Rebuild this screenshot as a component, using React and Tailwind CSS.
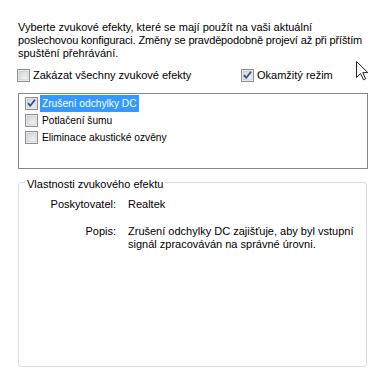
import React from 'react';

const Check = ({ checked }) => (
  <svg width="13" height="13" viewBox="0 0 13 13" className="shrink-0 block">
    <defs>
      <linearGradient id="cbg" x1="0" y1="0" x2="1" y2="1">
        <stop offset="0" stopColor="#d2d4d6" />
        <stop offset="1" stopColor="#f6f6f6" />
      </linearGradient>
    </defs>
    <rect x="0.5" y="0.5" width="12" height="12" fill="#fff" stroke="#8e8f8f" />
    <rect x="2" y="2" width="9" height="9" fill="url(#cbg)" stroke="#c0c3c6" strokeWidth="0.8" />
    {checked && (
      <path d="M3 6.2 L5.3 8.8 L10 2.8" fill="none" stroke="#3b4f8c" strokeWidth="1.8" strokeLinejoin="round" />
    )}
  </svg>
);

const Cursor = () => (
  <svg width="13" height="20" viewBox="0 0 13 20" className="absolute left-[356px] top-[61px]">
    <path d="M0.5 0.5 L0.5 16.5 L4.5 12.5 L7.5 18.8 L9.6 17.8 L6.8 11.6 L11.8 11.6 Z" fill="#fff" stroke="#222" strokeWidth="1" strokeLinejoin="miter" />
  </svg>
);

const effects = [
  { name: 'Zrušení odchylky DC', checked: true, selected: true },
  { name: 'Potlačení šumu', checked: false },
  { name: 'Eliminace akustické ozvěny', checked: false },
];

export default function App() {
  return (
    <div className="relative w-[383px] h-[380px] bg-white text-black text-[11px] leading-[13px] font-['Liberation_Sans',Arial,sans-serif] overflow-hidden">
      <p className="pt-[21px] pl-[18px]">
        Vyberte zvukové efekty, které se mají použít na vaši aktuální
        <br />
        <span className="tracking-[-0.15px]">
          poslechovou konfiguraci. Změny se pravděpodobně projeví až při příštím
        </span>
        <br />
        spuštění přehrávání.
      </p>

      <div className="flex items-center mt-[9px] pl-[17px] h-[13px]">
        <label className="flex items-center w-[224px]">
          <Check checked={false} />
          <span className="ml-[3px]">Zakázat všechny zvukové efekty</span>
        </label>
        <label className="flex items-center">
          <Check checked />
          <span className="ml-[3px]">Okamžitý režim</span>
        </label>
      </div>

      <div className="ml-[18px] mt-[11px] w-[350px] h-[76px] border border-[#828790] pt-[1px] pl-[6px] text-[10.2px]">
        {effects.map((e) => (
          <div key={e.name} className="flex items-center h-[17px]">
            <Check checked={e.checked} />
            <span
              className={
                e.selected
                  ? 'ml-[2px] px-[2px] h-[17px] flex items-center bg-[#3399ff] text-white'
                  : 'ml-[2px] px-[2px]'
              }
            >
              {e.name}
            </span>
          </div>
        ))}
      </div>

      <div className="relative ml-[18px] mt-[13px] w-[349px] h-[185px] border border-[#d5dfe5] rounded-[3px]">
        <span className="absolute left-[6px] -top-[5px] px-[2px] bg-white">
          Vlastnosti zvukového efektu
        </span>
        <div className="grid grid-cols-[97px_1fr] gap-x-[12px] gap-y-[14px] pt-[15px]">
          <div className="text-right">Poskytovatel:</div>
          <div>Realtek</div>
          <div className="text-right">Popis:</div>
          <div>
            Zrušení odchylky DC zajišťuje, aby byl vstupní
            <br />
            signál zpracováván na správné úrovni.
          </div>
        </div>
      </div>

      <Cursor />
    </div>
  );
}
